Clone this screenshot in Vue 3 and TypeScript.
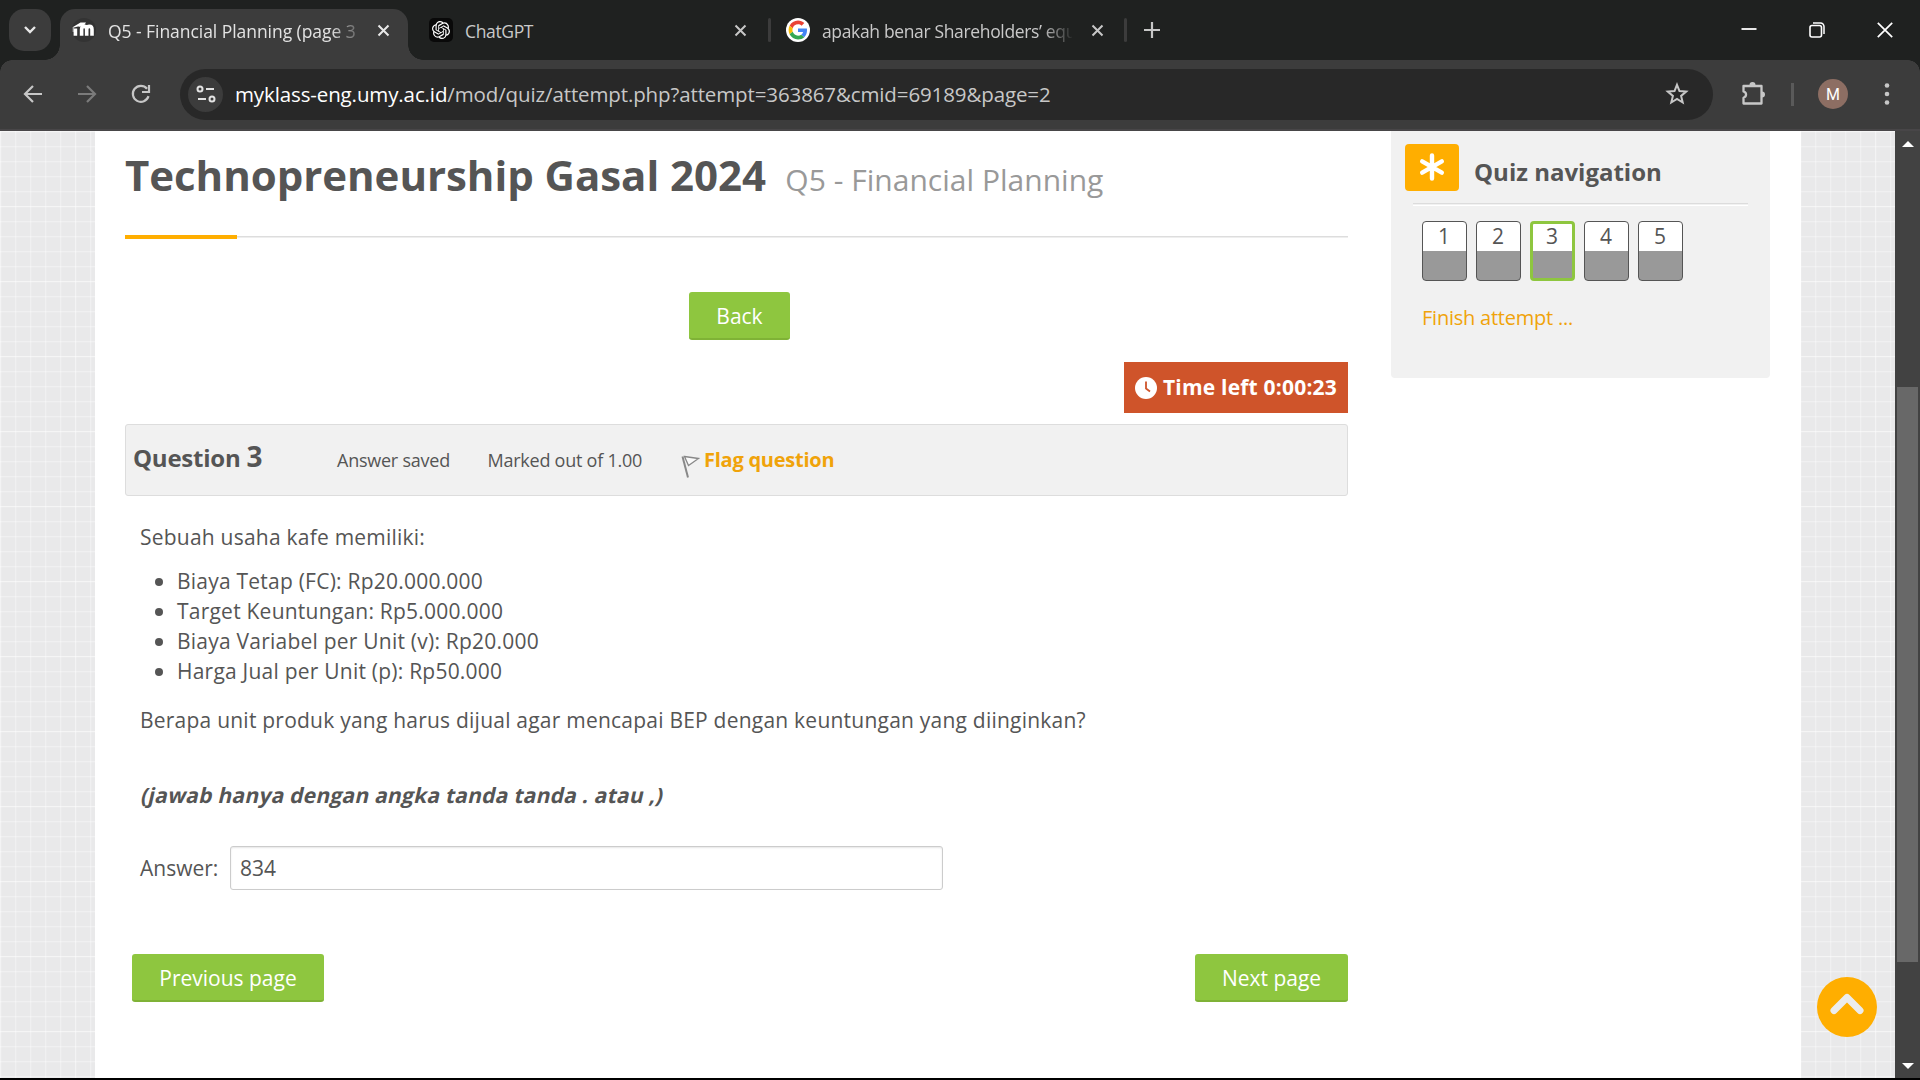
<script setup lang="ts">
interface Question {
  n: number
  current: boolean
}

const questions: Question[] = [1, 2, 3, 4, 5].map((n) => ({ n, current: n === 3 }))

const facts: string[] = [
  'Biaya Tetap (FC): Rp20.000.000',
  'Target Keuntungan: Rp5.000.000',
  'Biaya Variabel per Unit (v): Rp20.000',
  'Harga Jual per Unit (p): Rp50.000',
]
</script>

<template>
  <div class="window">
    <header class="tabstrip">
      <div class="tab-search">
        <svg width="14" height="10" viewBox="0 0 14 10"><path d="M2 2l5 5 5-5" fill="none" stroke="#e8e8e8" stroke-width="2.4" /></svg>
      </div>
      <div class="tab active">
        <svg class="fav" width="24" height="24" viewBox="0 0 24 24">
          <circle cx="12" cy="12" r="12" fill="#333" />
          <path d="M3.4 18.6V11.4M9.6 18.6V12.2c0-1.9.9-3 2.5-3s2.6 1.1 2.6 3V18.6M14.7 12.2c0-1.9 1.1-3 2.7-3s2.6 1.1 2.6 3V18.6" fill="none" stroke="#fff" stroke-width="3.6" transform="translate(0 -.8)" />
          <path d="M1 9L8.5 4.4 14 4.6 12 7.4C10 8.4 8 9 6 8.6L2 9.4z" fill="#fff" />
          <path d="M1.2 9v5" stroke="#ddd" stroke-width=".9" />
        </svg>
        <span class="tab-title t1">Q5 - Financial Planning (page 3</span>
        <svg class="x" width="13" height="13" viewBox="0 0 13 13"><path d="M1.5 1.5l10 10M11.5 1.5l-10 10" stroke="#e8e8e8" stroke-width="2" /></svg>
      </div>
      <div class="tab second">
        <svg class="fav" width="24" height="24" viewBox="0 0 24 24">
          <rect width="24" height="24" rx="5" fill="#090909" />
          <g transform="translate(3 3) scale(.75)">
            <path fill="#fff" d="M22.2819 9.8211a5.9847 5.9847 0 0 0-.5157-4.9108 6.0462 6.0462 0 0 0-6.5098-2.9A6.0651 6.0651 0 0 0 4.9807 4.1818a5.9847 5.9847 0 0 0-3.9977 2.9 6.0462 6.0462 0 0 0 .7427 7.0966 5.98 5.98 0 0 0 .511 4.9107 6.051 6.051 0 0 0 6.5146 2.9001A5.9847 5.9847 0 0 0 13.2599 24a6.0557 6.0557 0 0 0 5.7718-4.2058 5.9894 5.9894 0 0 0 3.9977-2.9001 6.0557 6.0557 0 0 0-.7475-7.0729zm-9.022 12.6081a4.4755 4.4755 0 0 1-2.8764-1.0408l.1419-.0804 4.7783-2.7582a.7948.7948 0 0 0 .3927-.6813v-6.7369l2.02 1.1686a.071.071 0 0 1 .038.052v5.5826a4.504 4.504 0 0 1-4.4945 4.4944zm-9.6607-4.1254a4.4708 4.4708 0 0 1-.5346-3.0137l.142.0852 4.783 2.7582a.7712.7712 0 0 0 .7806 0l5.8428-3.3685v2.3324a.0804.0804 0 0 1-.0332.0615L9.74 19.9502a4.4992 4.4992 0 0 1-6.1408-1.6464zM2.3408 7.8956a4.485 4.485 0 0 1 2.3655-1.9728V11.6a.7664.7664 0 0 0 .3879.6765l5.8144 3.3543-2.0201 1.1685a.0757.0757 0 0 1-.071 0l-4.8303-2.7865A4.504 4.504 0 0 1 2.3408 7.872zm16.5963 3.8558L13.1038 8.364 15.1192 7.2a.0757.0757 0 0 1 .071 0l4.8303 2.7913a4.4944 4.4944 0 0 1-.6765 8.1042v-5.6772a.79.79 0 0 0-.407-.667zm2.0107-3.0231l-.142-.0852-4.7735-2.7818a.7759.7759 0 0 0-.7854 0L9.409 9.2297V6.8974a.0662.0662 0 0 1 .0284-.0615l4.8303-2.7866a4.4992 4.4992 0 0 1 6.6802 4.66zM8.3065 12.863l-2.02-1.1638a.0804.0804 0 0 1-.038-.0567V6.0742a4.4992 4.4992 0 0 1 7.3757-3.4537l-.142.0805L8.704 5.459a.7948.7948 0 0 0-.3927.6813zm1.0976-2.3654l2.602-1.4998 2.6069 1.4998v2.9994l-2.5974 1.4997-2.6067-1.4997Z" />
          </g>
        </svg>
        <span class="tab-title t2">ChatGPT</span>
        <svg class="x" width="13" height="13" viewBox="0 0 13 13"><path d="M1.5 1.5l10 10M11.5 1.5l-10 10" stroke="#c7c7c7" stroke-width="2" /></svg>
      </div>
      <i class="sep"></i>
      <div class="tab third">
        <svg class="fav" width="24" height="24" viewBox="0 0 24 24">
          <circle cx="12" cy="12" r="12" fill="#fff" />
          <g transform="translate(2.6 2.6) scale(.392)">
            <path fill="#EA4335" d="M24 9.5c3.54 0 6.71 1.22 9.21 3.6l6.85-6.85C35.9 2.38 30.47 0 24 0 14.62 0 6.51 5.38 2.56 13.22l7.98 6.19C12.43 13.72 17.74 9.5 24 9.5z" />
            <path fill="#4285F4" d="M46.98 24.55c0-1.57-.15-3.09-.38-4.55H24v9.02h12.94c-.58 2.96-2.26 5.48-4.78 7.18l7.73 6c4.51-4.18 7.09-10.36 7.09-17.65z" />
            <path fill="#FBBC05" d="M10.53 28.59c-.48-1.45-.76-2.99-.76-4.59s.27-3.14.76-4.59l-7.98-6.19C.92 16.46 0 20.12 0 24c0 3.88.92 7.54 2.56 10.78l7.97-6.19z" />
            <path fill="#34A853" d="M24 48c6.48 0 11.93-2.13 15.89-5.81l-7.73-6c-2.15 1.45-4.92 2.3-8.16 2.3-6.26 0-11.57-4.22-13.47-9.91l-7.98 6.19C6.51 42.62 14.62 48 24 48z" />
          </g>
        </svg>
        <span class="tab-title t3">apakah benar Shareholders’ equ</span>
        <svg class="x" width="13" height="13" viewBox="0 0 13 13"><path d="M1.5 1.5l10 10M11.5 1.5l-10 10" stroke="#c7c7c7" stroke-width="2" /></svg>
      </div>
      <i class="sep"></i>
      <svg class="plus" width="16" height="16" viewBox="0 0 16 16"><path d="M8 0v16M0 8h16" stroke="#c7c7c7" stroke-width="2.2" /></svg>
      <div class="controls">
        <svg width="16" height="16" viewBox="0 0 16 16"><path d="M.5 7h15" stroke="#fff" stroke-width="1.8" /></svg>
        <svg width="16" height="16" viewBox="0 0 16 16"><rect x="1" y="3.5" width="11.5" height="11.5" rx="2" fill="none" stroke="#fff" stroke-width="1.6" /><path d="M4 1h7.5a3.5 3.5 0 0 1 3.5 3.5V12" fill="none" stroke="#fff" stroke-width="1.5" /></svg>
        <svg width="16" height="16" viewBox="0 0 16 16"><path d="M.8.8l14.4 14.4M15.2.8L.8 15.2" stroke="#fff" stroke-width="1.7" /></svg>
      </div>
    </header>

    <nav class="toolbar">
      <svg class="nav-i" width="20" height="20" viewBox="0 0 20 20"><path d="M19 10H2.5M10 2L2 10l8 8" fill="none" stroke="#c7c7c7" stroke-width="2.2" /></svg>
      <svg class="nav-i" width="20" height="20" viewBox="0 0 20 20"><path d="M1 10h16.5M10 2l8 8-8 8" fill="none" stroke="#7b7b7b" stroke-width="2.2" /></svg>
      <svg class="nav-i" width="20" height="20" viewBox="0 0 20 20"><path d="M17.5 12.2A8 8 0 1 1 16 4.7M18 1v7h-7" fill="none" stroke="#c7c7c7" stroke-width="2.2" /></svg>
      <div class="omnibox">
        <span class="site">
          <svg width="20" height="20" viewBox="0 0 20 20" fill="none" stroke="#e3e3e3" stroke-width="2"><circle cx="4" cy="5" r="2.5" /><path d="M10 5h8M2 15h8" /><circle cx="16" cy="15" r="2.5" /></svg>
        </span>
        <span class="url"><b>myklass-eng.umy.ac.id</b>/mod/quiz/attempt.php?attempt=363867&amp;cmid=69189&amp;page=2</span>
        <svg class="star" width="24" height="24" viewBox="0 0 24 24"><path d="M12 2.8l2.5 6.3 6.7.5-5.1 4.3 1.6 6.6L12 17l-5.7 3.5 1.6-6.6-5.1-4.3 6.7-.5z" fill="none" stroke="#c7c7c7" stroke-width="2" /></svg>
      </div>
      <svg class="ext" width="26" height="26" viewBox="0 0 26 26"><path d="M4 5h17.5v17.5H3.5v-5.7c3.4-1.2 3.4-5.2 0-6.4V5z" fill="none" stroke="#c7c7c7" stroke-width="2.3" stroke-linejoin="round" /><path d="M9.5 4a3 3 0 0 1 6 0zM22 10.5a3 3 0 0 1 0 6z" fill="#c7c7c7" /></svg>
      <i class="tsep"></i>
      <span class="avatar">M</span>
      <svg class="dots" width="6" height="24" viewBox="0 0 6 24" fill="#c7c7c7"><circle cx="3" cy="3.5" r="2.3" /><circle cx="3" cy="12" r="2.3" /><circle cx="3" cy="20.5" r="2.3" /></svg>
    </nav>

    <div class="viewport">
      <div class="desk">
        <div class="page">
          <main>
            <h1>Technopreneurship Gasal 2024 <small>Q5 - Financial Planning</small></h1>
            <div class="rule"></div>
            <button class="btn back">Back</button>
            <div class="timer">
              <svg width="22" height="22" viewBox="0 0 22 22"><circle cx="11" cy="11" r="11" fill="#fff" /><path d="M11 4.5v7l4 3" fill="none" stroke="#cf542a" stroke-width="1.8" /></svg>
              <span>Time left 0:00:23</span>
            </div>
            <div class="info">
              <h3>Question <span>3</span></h3>
              <span class="state">Answer saved</span>
              <span class="grade">Marked out of 1.00</span>
              <svg class="flag" width="20" height="24" viewBox="0 0 20 24"><path d="M1.5 1.5L7 22.5" stroke="#888" stroke-width="2" /><path d="M3.5 1.5L17.5 3.5 7.5 10.5z" fill="#fafafa" stroke="#888" stroke-width="1.3" /></svg>
              <a class="flag-link">Flag question</a>
            </div>
            <section class="question">
              <p>Sebuah usaha kafe memiliki:</p>
              <ul>
                <li v-for="f in facts" :key="f">{{ f }}</li>
              </ul>
              <p class="ask">Berapa unit produk yang harus dijual agar mencapai BEP dengan keuntungan yang diinginkan?</p>
              <p class="hint">(jawab hanya dengan angka tanda tanda . atau ,)</p>
              <div class="answer">
                <label>Answer:</label>
                <div class="field">834</div>
              </div>
            </section>
            <div class="pager">
              <button class="btn prev">Previous page</button>
              <button class="btn next">Next page</button>
            </div>
          </main>
          <aside>
            <div class="block-head">
              <span class="badge">
                <svg width="26" height="28" viewBox="0 0 26 28"><path d="M13 2.5v23M3.2 8.3l19.6 11.4M22.8 8.3L3.2 19.7" stroke="#fff" stroke-width="4.4" stroke-linecap="round" /></svg>
              </span>
              <h2>Quiz navigation</h2>
            </div>
            <div class="block-rule"></div>
            <div class="qnav">
              <a v-for="q in questions" :key="q.n" class="qbtn" :class="{ current: q.current }">{{ q.n }}</a>
            </div>
            <a class="finish">Finish attempt ...</a>
          </aside>
        </div>
        <span class="to-top">
          <svg width="60" height="60" viewBox="0 0 60 60"><circle cx="30" cy="30" r="30" fill="#ffae00" /><path d="M17 33.5L30 20.5l13 13" fill="none" stroke="#ececec" stroke-width="7" stroke-linecap="round" stroke-linejoin="round" /></svg>
        </span>
      </div>
      <div class="scrollbar">
        <svg width="12" height="6" viewBox="0 0 12 6"><path d="M0 6L6 0l6 6z" fill="#fff" /></svg>
        <div class="thumb"></div>
        <svg width="12" height="6" viewBox="0 0 12 6"><path d="M0 0l6 6 6-6z" fill="#fff" /></svg>
      </div>
    </div>
  </div>
</template>

<style>
html,
body {
  margin: 0;
  overflow: hidden;
  background: #000;
}
</style>

<style scoped>
* {
  box-sizing: border-box;
}
svg {
  display: block;
  flex: none;
}
.window {
  width: 1920px;
  height: 1080px;
  display: flex;
  flex-direction: column;
  padding-bottom: 2px;
  background: #000;
  font-family: 'Open Sans', 'Noto Sans', sans-serif;
  overflow: hidden;
}
.tabstrip {
  height: 60px;
  flex: none;
  display: flex;
  align-items: center;
  background: #1f2120;
  padding-left: 9px;
}
.tab-search {
  width: 42px;
  height: 42px;
  border-radius: 15px;
  background: #3c3c3c;
  display: flex;
  align-items: center;
  justify-content: center;
}
.tab {
  display: flex;
  align-items: center;
  height: 42px;
}
.active {
  position: relative;
  margin-left: 9px;
  width: 348px;
  height: 51px;
  align-self: flex-end;
  padding: 0 0 9px 12px;
  border-radius: 15px 15px 0 0;
  background: #3c3c3c;
}
.active::before,
.active::after {
  content: '';
  position: absolute;
  bottom: 0;
  width: 15px;
  height: 15px;
}
.active::before {
  left: -15px;
  background: radial-gradient(circle at 0 0, transparent 14.5px, #3c3c3c 15px);
}
.active::after {
  right: -15px;
  background: radial-gradient(circle at 100% 0, transparent 14.5px, #3c3c3c 15px);
}
.tab-title {
  font-size: 17.5px;
  line-height: 26px;
  white-space: nowrap;
  color: #c9c9c9;
  margin-left: 12px;
  padding-top: 2px;
  letter-spacing: -0.35px;
}
.t1 {
  color: #e3e3e3;
  width: 248px;
  letter-spacing: -0.05px;
  -webkit-mask-image: linear-gradient(90deg, #000 222px, transparent 258px);
  mask-image: linear-gradient(90deg, #000 222px, transparent 258px);
}
.t2 {
  width: 248px;
}
.t3 {
  width: 250px;
  -webkit-mask-image: linear-gradient(90deg, #000 220px, transparent 252px);
  mask-image: linear-gradient(90deg, #000 220px, transparent 252px);
}
.active .x,
.second .x {
  margin-left: 21px;
}
.second {
  margin-left: 21px;
  width: 340px;
}
.sep {
  width: 3px;
  height: 24px;
  border-radius: 2px;
  background: #3c3c3c;
  flex: none;
}
.second + .sep {
  margin-left: -1px;
}
.third {
  margin-left: 15px;
  width: 341px;
}
.third .x {
  margin-left: 19px;
}
.third + .sep {
  margin-left: -3px;
}
.plus {
  margin-left: 17px;
}
.controls {
  margin-left: auto;
  margin-right: 27px;
  display: flex;
  gap: 52px;
}
.toolbar {
  height: 71px;
  flex: none;
  display: flex;
  align-items: center;
  background:
    radial-gradient(circle at 12px 12px, #3c3c3c 11.5px, transparent 12px) 0 0 / 12px 12px no-repeat,
    radial-gradient(circle at 0 12px, #3c3c3c 11.5px, transparent 12px) 100% 0 / 12px 12px no-repeat,
    linear-gradient(#3c3c3c, #3c3c3c) 12px 0 / 1896px 12px no-repeat,
    linear-gradient(#3c3c3c, #3c3c3c) 0 12px / 100% 100% no-repeat,
    #1f2120;
  border-bottom: 2px solid #484648;
  padding: 0 0 1px 23px;
}
.nav-i {
  margin-right: 34px;
}
.omnibox {
  margin-left: -5px;
  width: 1533px;
  height: 51px;
  border-radius: 26px;
  background: #282828;
  display: flex;
  align-items: center;
  padding: 0 24px 0 8px;
}
.site {
  width: 35px;
  height: 35px;
  border-radius: 50%;
  background: #3c3c3c;
  display: flex;
  align-items: center;
  justify-content: center;
}
.url {
  margin-left: 12px;
  font-size: 20.5px;
  color: #c7c7c7;
  white-space: nowrap;
  letter-spacing: -0.12px;
}
.url b {
  font-weight: 400;
  color: #fff;
}
.star {
  margin-left: auto;
}
.ext {
  margin-left: 27px;
}
.tsep {
  width: 3px;
  height: 23px;
  margin-left: 25px;
  background: #5a5a5a;
}
.avatar {
  margin-left: 24px;
  width: 30px;
  height: 30px;
  border-radius: 50%;
  background: #8d6e63;
  color: #fff;
  font: 16px/32px Roboto, sans-serif;
  text-align: center;
}
.dots {
  margin-left: 36px;
}
.viewport {
  flex: 1;
  min-height: 0;
  display: flex;
}
.desk {
  position: relative;
  flex: 1;
  padding-left: 95px;
  background:
    linear-gradient(rgba(255, 255, 255, 0.3) 1px, transparent 1px) 0 75px / 75px 75px,
    linear-gradient(90deg, rgba(255, 255, 255, 0.2) 1px, transparent 1px) 0 0 / 75px 75px,
    linear-gradient(rgba(255, 255, 255, 0.32) 1px, rgba(255, 255, 255, 0.1) 1px 2px, transparent 2px) 0 0 / 15px 15px,
    linear-gradient(90deg, rgba(255, 255, 255, 0.32) 1px, rgba(255, 255, 255, 0.1) 1px 2px, transparent 2px) 0 0 / 15px 15px,
    #e9e9ea;
}
.page {
  width: 1706px;
  height: 100%;
  background: #fff;
  padding-left: 30px;
  display: flex;
  align-items: flex-start;
  color: #555;
}
main {
  width: 1223px;
  display: flex;
  flex-direction: column;
  font-size: 21px;
  line-height: 30px;
}
h1 {
  margin: 14px 0 0;
  font-size: 42px;
  line-height: 60px;
  font-weight: 700;
  letter-spacing: -0.04px;
  white-space: nowrap;
}
h1 small {
  font-size: 30px;
  font-weight: 400;
  letter-spacing: 0.02px;
  color: #999;
  margin-left: 8.5px;
}
.rule {
  height: 4px;
  margin-top: 25px;
  background:
    linear-gradient(#ffae00, #ffae00) 0 0 / 112px 4px no-repeat,
    linear-gradient(#ddd, #ddd) 0 1px / 100% 1px no-repeat,
    linear-gradient(#eee, #eee) 0 2px / 100% 1px no-repeat;
}
.btn {
  height: 48px;
  border: 0;
  border-bottom: 2px solid #7fb236;
  border-radius: 3px;
  background: #8ec63f;
  color: #fff;
  font: 21px/44px 'Open Sans', sans-serif;
  padding: 2px 0 0;
  text-align: center;
  white-space: nowrap;
}
.back {
  width: 101px;
  margin: 53px 0 0 564px;
}
.timer {
  align-self: flex-end;
  margin-top: 22px;
  width: 224px;
  height: 51px;
  background: #cf542a;
  color: #fff;
  font-weight: 700;
  font-size: 21px;
  letter-spacing: 0.2px;
  display: flex;
  align-items: center;
  padding-left: 11px;
  gap: 6px;
  white-space: nowrap;
}
.timer span {
  margin-bottom: 2px;
}
.info {
  margin-top: 11px;
  height: 72px;
  border: 1px solid #ddd;
  border-radius: 3px;
  background: #f1f1f1;
  display: flex;
  align-items: baseline;
  padding: 13px 0 0 7px;
  font-size: 18px;
  letter-spacing: -0.24px;
  white-space: nowrap;
}
h3 {
  margin: 0;
  width: 204px;
  font-size: 24px;
  line-height: 36px;
}
h3 span {
  font-size: 28px;
}
.state {
  width: 150.5px;
}
.grade {
  width: 193.5px;
}
.flag {
  align-self: flex-start;
  margin-top: 17px;
}
.flag-link {
  margin-left: 3px;
  color: #f0a30a;
  font-weight: 700;
  font-size: 20px;
}
.question {
  padding: 26px 15px 0;
}
p,
ul {
  margin: 0;
  white-space: nowrap;
  letter-spacing: 0.225px;
}
ul {
  margin-top: 14px;
  padding: 0;
  list-style: none;
}
li {
  display: flex;
  align-items: center;
  padding-left: 15px;
}
li::before {
  content: '';
  width: 8px;
  height: 8px;
  margin: 2px 14px 0 0;
  border-radius: 50%;
  background: #555;
}
.ask {
  margin-top: 19px;
}
.hint {
  margin-top: 45px;
  font-weight: 700;
  letter-spacing: 0.23px;
  transform: skewX(-13deg);
  transform-origin: 0 23px;
}
.answer {
  margin-top: 36px;
  display: flex;
  align-items: center;
}
.answer label {
  width: 90px;
}
.field {
  width: 713px;
  height: 44px;
  border: 1px solid #ccc;
  border-radius: 3px;
  box-shadow: inset 0 1px 2px rgba(0, 0, 0, 0.1);
  padding-left: 9px;
  line-height: 43px;
  font-size: 21px;
}
.pager {
  margin-top: 64px;
  padding-left: 7px;
  display: flex;
  justify-content: space-between;
}
.prev {
  width: 192px;
}
.next {
  width: 153px;
}
aside {
  margin-left: 43px;
  width: 379px;
  height: 247px;
  background: #f1f1f1;
  border-radius: 0 0 4px 4px;
  padding: 13px 22px 0 14px;
}
.block-head {
  display: flex;
  height: 47px;
}
.badge {
  width: 54px;
  height: 47px;
  border-radius: 4px;
  background: #ffae00;
  display: flex;
  align-items: center;
  justify-content: center;
  padding-bottom: 2px;
}
.block-head h2 {
  margin: 10px 0 0 15px;
  font-size: 24px;
  line-height: 36px;
  white-space: nowrap;
}
.block-rule {
  margin: 12px 0 0 8px;
  height: 3px;
  border-top: 1px solid #dcdcdc;
  border-bottom: 1px solid #fff;
}
.qnav {
  display: flex;
  gap: 9px;
  margin: 15px 0 0 17px;
}
.qbtn {
  width: 45px;
  height: 60px;
  border: 1px solid #555;
  border-radius: 4px;
  background: linear-gradient(#fff 50%, #999 50%);
  font-size: 21px;
  line-height: 29px;
  text-align: center;
  padding-right: 1px;
}
.qbtn.current {
  border: 3px solid #8ec63f;
  line-height: 25px;
}
.finish {
  display: block;
  margin: 22px 0 0 17px;
  font-size: 20px;
  line-height: 30px;
  letter-spacing: -0.23px;
  color: #f0a30a;
  white-space: nowrap;
}
.to-top {
  position: absolute;
  left: 1817px;
  top: 846px;
}
.scrollbar {
  width: 25px;
  background: #424242;
  display: flex;
  flex-direction: column;
  align-items: center;
  padding: 10px 0 9px;
}
.thumb {
  width: 21px;
  height: 575px;
  margin: 240px 0 auto;
  background: #686868;
}
</style>
